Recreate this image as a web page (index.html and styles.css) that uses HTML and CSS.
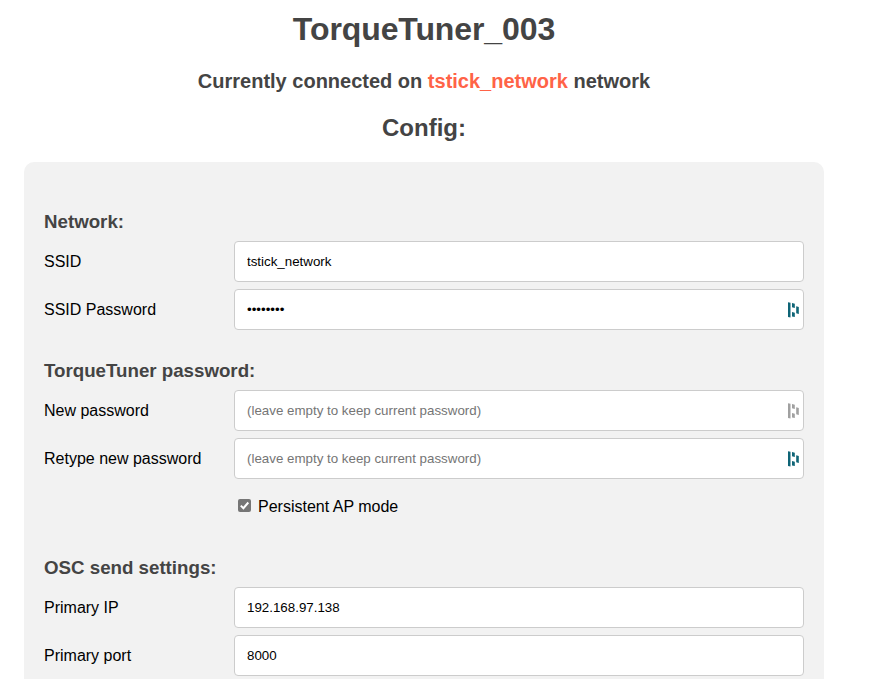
FILE: index.html
```html
<!DOCTYPE html>
<html lang="en">
<head>
<meta charset="utf-8">
<title>TorqueTuner_003</title>
<link rel="stylesheet" href="styles.css">
</head>
<body>
<main class="page">
  <h1>TorqueTuner_003</h1>
  <h3 class="status">Currently connected on <span class="network">tstick_network</span> network</h3>
  <h2>Config:</h2>
  <form class="panel">
    <section>
      <h3>Network:</h3>
      <div class="row"><label for="ssid">SSID</label><div class="field"><input id="ssid" type="text" value="tstick_network"></div></div>
      <div class="row"><label for="pw">SSID Password</label><div class="field"><input id="pw" type="password" value="password"><svg class="key" viewBox="0 0 12 16"><path d="M0 .2l2.5.6v14.6l-2.5-.4zM4 1l2.8.8v4.2l-2.8-.8zM4 10l2.8.8v4.2l-2.8-.6zM8.2 4.2l2.6.8v7l-2.6-.7z"/></svg></div></div>
    </section>
    <section>
      <h3>TorqueTuner password:</h3>
      <div class="row"><label for="npw">New password</label><div class="field"><input id="npw" type="password" placeholder="(leave empty to keep current password)"><svg class="key muted" viewBox="0 0 12 16"><path d="M0 .2l2.5.6v14.6l-2.5-.4zM4 1l2.8.8v4.2l-2.8-.8zM4 10l2.8.8v4.2l-2.8-.6zM8.2 4.2l2.6.8v7l-2.6-.7z"/></svg></div></div>
      <div class="row"><label for="rpw">Retype new password</label><div class="field"><input id="rpw" type="password" placeholder="(leave empty to keep current password)"><svg class="key" viewBox="0 0 12 16"><path d="M0 .2l2.5.6v14.6l-2.5-.4zM4 1l2.8.8v4.2l-2.8-.8zM4 10l2.8.8v4.2l-2.8-.6zM8.2 4.2l2.6.8v7l-2.6-.7z"/></svg></div></div>
      <label class="check"><span class="box"><svg viewBox="0 0 13 13"><path d="M2.8 6.6l2.6 2.6 4.9-5.7"/></svg></span>Persistent AP mode</label>
    </section>
    <section>
      <h3>OSC send settings:</h3>
      <div class="row"><label for="ip">Primary IP</label><div class="field"><input id="ip" type="text" value="192.168.97.138"></div></div>
      <div class="row"><label for="port">Primary port</label><div class="field"><input id="port" type="text" value="8000"></div></div>
    </section>
  </form>
</main>
</body>
</html>
```
FILE: styles.css
```css
* { box-sizing: border-box; }
body { margin: 0; background: #fff; color: #000; font: 16px/18px "Liberation Sans", Arial, sans-serif; }
.page { width: 800px; height: 679px; margin-left: 24px; padding-top: 10px; display: flex; flex-direction: column; }
h1, h2, h3 { margin: 0; color: #444; text-align: center; }
h1 { font-size: 32px; line-height: 38px; letter-spacing: -0.1px; }
.status { margin-top: 21px; font-size: 20px; line-height: 24px; }
.network { color: #ff6347; }
h2 { margin-top: 21px; font-size: 24px; line-height: 28px; }
.panel { margin-top: 20px; flex: 1; min-height: 0; padding: 49px 20px 0; background: #f2f2f2; border-radius: 10px 10px 0 0; }
.panel h3 { text-align: left; font-size: 18.72px; line-height: 21px; margin-bottom: 9px; }
.panel section { margin-bottom: 30px; }
.panel section:nth-of-type(2) { margin-bottom: 41px; }
.panel section:last-child, .panel section:last-child .row:last-child { margin-bottom: 0; }
.row { display: flex; height: 41px; margin-bottom: 7px; }
.row label { width: 190px; padding-top: 12px; }
.field { position: relative; flex: 1; }
input { width: 100%; height: 41px; padding: 12px; border: 1px solid #ccc; border-radius: 4px; background: #fff; color: #000; font: 13.333px/15px "Liberation Sans", Arial, sans-serif; }
input::placeholder { color: #757575; }
.key { position: absolute; right: 4px; top: 13px; width: 12px; height: 16px; fill: #0e6476; }
.muted { fill: #a0a0a0; }
.check { display: flex; align-items: flex-start; margin: 19px 0 0 194px; height: 18px; }
.box { width: 13px; height: 13px; margin: 1px 7px 0 0; border-radius: 2px; background: #767676; }
.box svg { display: block; fill: none; stroke: #fff; stroke-width: 2; }
```
